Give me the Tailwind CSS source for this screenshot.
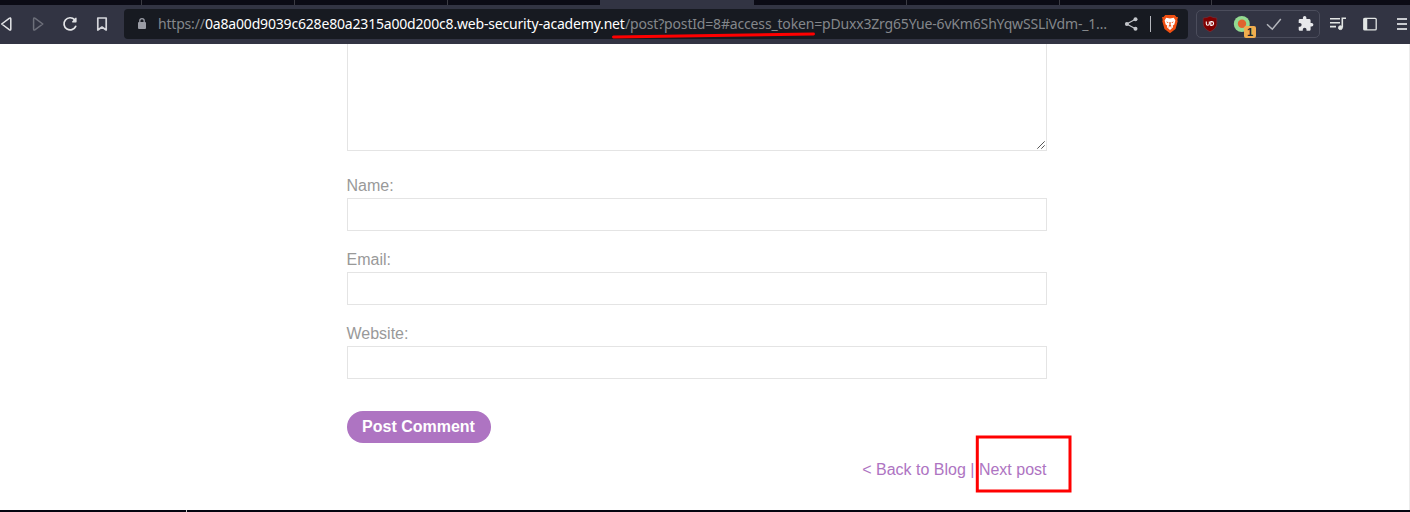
<!DOCTYPE html>
<html lang="en">
<head>
<meta charset="utf-8">
<title>Blog post</title>
<script src="https://cdn.jsdelivr.net/npm/@tailwindcss/browser@4"></script>
</head>
<body class="relative h-[512px] w-[1410px] overflow-hidden bg-white font-['Liberation_Sans',Arial,sans-serif]">
<div class="flex h-[512px] flex-col">
  <!-- tab strip -->
  <div class="flex h-[5px] shrink-0 bg-[#0b0b15]">
    <div class="w-[142px] border-r border-[#3b3b43]"></div>
    <div class="w-[153px] border-r border-[#3b3b43]"></div>
    <div class="w-[153px] border-r border-[#3b3b43]"></div>
    <div class="w-[152px]"></div>
    <div class="w-[154px] bg-[#323443]"></div>
    <div class="w-[153px] border-r border-[#3b3b43]"></div>
    <div class="w-[153px] border-r border-[#3b3b43]"></div>
    <div class="w-[152px] border-r border-[#3b3b43]"></div>
  </div>
  <!-- toolbar -->
  <header class="flex h-[39px] shrink-0 items-start bg-[#323443] pt-1">
    <nav class="flex w-[124px]">
      <svg class="h-[30px] w-[22px]" viewBox="0 9 22 30" fill="none" stroke="#e4e5e8" stroke-width="1.5" stroke-linejoin="round"><path d="M1.7 24 9.2 18.3Q10.8 17.2 10.8 19V29Q10.8 30.8 9.2 29.7Z"/></svg>
      <svg class="h-[30px] w-8" viewBox="22 9 32 30" fill="none" stroke="#6d6f7a" stroke-width="1.5" stroke-linejoin="round"><path d="M42.8 24 35.2 18.3Q33.6 17.2 33.6 19V29Q33.6 30.8 35.2 29.7Z"/></svg>
      <svg class="h-[30px] w-8" viewBox="54 9 32 30" fill="none" stroke="#e4e5e8" stroke-width="1.7" stroke-linecap="round"><path d="M74.6 19.7A6.1 6.1 0 1 0 75.7 26.3"/><path d="M76 18.2V21.8H72.6Z" fill="#e4e5e8" stroke-width="1.2" stroke-linejoin="round"/></svg>
      <svg class="h-[30px] w-8" viewBox="86 9 32 30" fill="none" stroke="#d5d6db" stroke-width="1.7" stroke-linejoin="round"><path d="M97.800 18H106.200V30L102 27 97.800 30Z"/></svg>
    </nav>
    <!-- address bar -->
    <div class="flex h-[30px] w-[1064px] rounded-[4px] bg-[#171a21]">
      <svg class="h-[30px] w-[34px]" viewBox="124 9 34 30"><rect x="138" y="22" width="8" height="7" rx="1" fill="#9a9ca5"/><path d="M139.8 22.5V20.8a2.2 2.2 0 0 1 4.4 0V22.5" fill="none" stroke="#9a9ca5" stroke-width="1.3"/></svg>
      <div class="flex w-[958px] font-['Noto_Sans',sans-serif] text-[14px] leading-[29px] whitespace-nowrap text-[#84878b]">
        <span class="w-[47px] tracking-[-0.2px]">https://</span>
        <span class="w-[420px] tracking-[-0.18px] text-white">0a8a00d9039c628e80a2315a00d200c8.web-security-academy.net</span>
        <span class="w-[491px] tracking-[-0.17px]">/post?postId=8#access_token=pDuxx3Zrg65Yue-6vKm6ShYqwSSLiVdm-_1…</span>
      </div>
      <svg class="h-[30px] w-[72px]" viewBox="1116 9 72 30">
        <path d="M1135.5 19.3 1126.7 24 1135.5 28.7" fill="none" stroke="#c3c5ca" stroke-width="1.2"/>
        <g fill="#c3c5ca"><circle cx="1135.5" cy="19.2" r="2"/><circle cx="1126.9" cy="24" r="2"/><circle cx="1135.5" cy="28.8" r="2"/></g>
        <path d="M1150.5 16V32" stroke="#b5b7bd"/>
        <path d="M1165.3 15H1174.7L1176.5 17 1178 17.1 1177.3 20 1177.7 21.2 1175.5 29 1170 33.2 1164.5 29 1162.3 21.2 1162.7 20 1162 17.1 1163.5 17Z" fill="#f04f12"/>
        <path d="M1166.2 17.8 1170 18.4 1173.8 17.8 1175.4 20.6 1174.3 24.5 1172.8 25.5 1173 27.2 1170 30.1 1167 27.2 1167.2 25.5 1165.7 24.5 1164.6 20.6Z" fill="#fff"/>
        <path d="M1166 21.5 1168.6 22.3 1167.8 23.1ZM1174 21.5 1171.4 22.3 1172.2 23.1ZM1169.2 22.3H1170.8L1170.5 24.7 1171.5 25.4 1170 26.3 1168.5 25.4 1169.5 24.7Z" fill="#f04f12"/>
        <path d="M1168.2 27.2 1170 26.5 1171.8 27.2" stroke="#f04f12" stroke-width=".6" fill="none"/>
      </svg>
    </div>
    <!-- extensions -->
    <div class="ml-2 mt-px flex h-[28px] w-[124px] rounded-[5px] border border-[#4b4d5c]">
      <svg class="h-[26px] w-[29px]" viewBox="1197 11 29 26"><path d="M1210 16.2Q1212.5 17.8 1216.8 18V23.5Q1216.8 28.5 1210 31.8 1203.2 28.5 1203.2 23.5V18Q1207.5 17.8 1210 16.2Z" fill="#800000" stroke="#77323c" stroke-width=".6"/><path d="M1206.3 21.4V23.8a1.5 1.5 0 0 0 3 0V21.4M1210.8 21.600V25.400H1211.700a1.900 1.900 0 0 0 0-3.800Z" fill="none" stroke="#fff" stroke-width="1.1"/></svg>
      <div class="relative h-[26px] w-[32px]">
        <svg class="size-full" viewBox="1226 11 32 26"><circle cx="1241.8" cy="24" r="8" fill="#93da91"/><circle cx="1242" cy="23.8" r="4.2" fill="#e0632e"/></svg>
        <span class="absolute left-[18px] top-[15px] h-[12px] w-[12px] rounded-[2px] bg-[#f0ad4e] text-center text-[11px] font-bold leading-[12px] text-[#20242b]">1</span>
      </div>
      <svg class="h-[26px] w-[32px]" viewBox="1258 11 32 26" fill="none" stroke="#b4b6bc" stroke-width="1.5"><path d="M1267 24.2 1272.3 29.2 1280.8 19"/></svg>
      <svg class="h-[26px] w-[29px]" viewBox="1290 11 29 26"><path transform="translate(1297.3 15.4) scale(.7)" d="M20.500 11H19V7c0-1.100-.9-2-2-2h-4V3.500a2.500 2.500 0 0 0-5 0V5H4c-1.100 0-2 .9-2 2v3.800h1.500a2.700 2.700 0 0 1 0 5.400H2V20c0 1.100.9 2 2 2h3.800v-1.500a2.700 2.700 0 0 1 5.400 0V22H17c1.100 0 2-.9 2-2v-4h1.500a2.500 2.500 0 0 0 0-5Z" fill="#e8e9ec"/></svg>
    </div>
    <svg class="h-[30px] w-[90px]" viewBox="1320 9 90 30" fill="none" stroke="#e2e5e4" stroke-width="1.6">
      <path d="M1330 18.700H1340M1330 22.700H1340M1330 26.600H1336M1342.300 27.500V18.300H1346"/><circle cx="1340.400" cy="27.700" r="1.900" fill="#e2e5e4" stroke-width="1"/>
      <rect x="1363.800" y="18.300" width="12.400" height="11.600" rx="1" stroke-width="1.300"/><path d="M1365.500 18V30" stroke-width="3.500"/>
      <path d="M1397 19H1407M1397 24H1407M1397 29H1407" stroke="#c9cbd0" stroke-width="2"/>
    </svg>
  </header>
  <!-- page -->
  <main class="flex h-[466px] shrink-0 flex-col border-r border-[#ececec] bg-white pl-[346.5px] text-[16px] text-[#999]">
    <div class="flex h-[107px] w-[700px] shrink-0 items-end justify-end border border-t-0 border-[#e4e4e4]">
      <svg class="mb-px mr-px size-[8px]" viewBox="0 0 8 8" stroke="#555" stroke-width="1" fill="none"><path d="M.3 7.700 7.700.3M4.300 7.700 7.700 4.300"/></svg>
    </div>
    <label class="mt-[25px] h-[22px] leading-[20px]">Name:</label>
    <div class="h-[33px] w-[700px] border border-[#e4e4e4]"></div>
    <label class="mt-[19px] h-[22px] leading-[20px]">Email:</label>
    <div class="h-[33px] w-[700px] border border-[#e4e4e4]"></div>
    <label class="mt-[19px] h-[22px] leading-[20px]">Website:</label>
    <div class="h-[33px] w-[700px] border border-[#e4e4e4]"></div>
    <button class="mt-8 h-8 w-[144px] rounded-full bg-[#ae74c2] text-center font-bold leading-[32px] text-white">Post Comment</button>
    <div class="mt-[17px] flex w-[700px] justify-end leading-[20px] text-[#ae74c2]"><a>&lt; Back to Blog</a><span class="whitespace-pre"> | </span><a>Next post</a></div>
  </main>
  <footer class="h-[2px] shrink-0 bg-[#04040f] pl-[186px]"><div class="h-[2px] w-px bg-[#ccc]"></div></footer>
</div>
<!-- red annotations -->
<svg class="pointer-events-none absolute left-0 top-0 h-[512px] w-[1410px]" viewBox="0 0 1410 512" fill="none" stroke="#f00" stroke-width="3"><path d="M613.500 37 813.500 34" stroke-linecap="round"/><rect x="977.300" y="437" width="92.700" height="54"/></svg>
</body>
</html>
